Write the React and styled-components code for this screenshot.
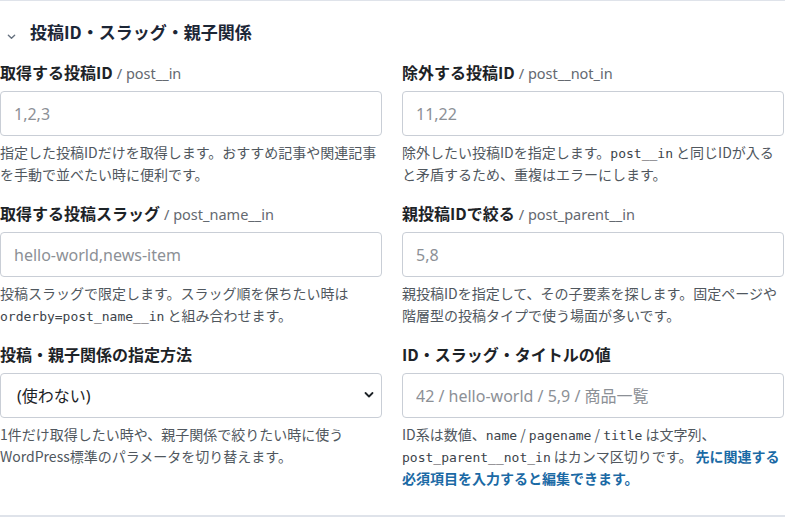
import React from "react";
import styled, { createGlobalStyle } from "styled-components";

const Global = createGlobalStyle`
  html, body { margin: 0; padding: 0; background: #ffffff; }
  body {
    font-family: "Noto Sans CJK JP", sans-serif;
    -webkit-font-smoothing: antialiased;
  }
  * { box-sizing: border-box; }
`;

const Panel = styled.section`
  width: 785px;
  border-top: 1px solid #dfe3ea;
  border-bottom: 2px solid #dfe3ea;
  padding: 19px 1px 26px 0;
`;

const Header = styled.div`
  display: flex;
  align-items: center;
  gap: 14px;
  padding-left: 7px;
  height: 24px;
  margin-bottom: 17px;
`;

const Chevron = styled.svg`
  width: 9px;
  height: 9px;
  margin-top: 9px;
  color: #66717f;
`;

const Title = styled.h2`
  margin: 0;
  font-size: 17px;
  line-height: 24px;
  font-weight: 700;
  color: #1c2636;
  font-family: "Noto Sans CJK JP", sans-serif;
`;

const Grid = styled.div`
  display: grid;
  grid-template-columns: 382px 382px;
  column-gap: 20px;
  row-gap: 17px;
  align-items: start;
`;

const Field = styled.div`
  display: flex;
  flex-direction: column;
`;

const Label = styled.label`
  display: flex;
  align-items: baseline;
  height: 22px;
  font-family: "Noto Sans CJK JP", sans-serif;
  font-size: 16px;
  line-height: 22px;
  font-weight: 700;
  color: #1d2327;
  margin-bottom: 8px;
  white-space: nowrap;
`;

const Key = styled.span`
  font-family: "Noto Sans", sans-serif;
  font-size: 14.5px;
  line-height: 1;
  font-weight: 400;
  color: #646970;
  margin-left: 4px;
`;

const Input = styled.input`
  width: 100%;
  height: 45px;
  border: 1px solid #c9ced6;
  border-radius: 4px;
  padding: 0 13px;
  font-family: "Noto Sans", "Noto Sans CJK JP", sans-serif;
  font-size: 16px;
  color: #1d2327;
  background: #fff;
  outline: none;
  &::placeholder { color: #8c9096; }
`;

const SelectWrap = styled.div`
  position: relative;
  width: 100%;
`;

const Select = styled.select`
  appearance: none;
  -webkit-appearance: none;
  width: 100%;
  height: 45px;
  border: 1px solid #c9ced6;
  border-radius: 4px;
  padding: 0 16px;
  font-family: "Noto Sans", "Noto Sans CJK JP", sans-serif;
  font-size: 16px;
  color: #1d2327;
  background: #fff;
  outline: none;
`;

const SelectArrow = styled.svg`
  position: absolute;
  right: 8px;
  top: 18px;
  width: 10px;
  height: 8px;
  pointer-events: none;
  color: #1d2327;
`;

const Help = styled.p`
  margin: 5px 0 0;
  font-family: "Noto Sans CJK JP", sans-serif;
  font-size: 14px;
  line-height: 22px;
  color: #50575e;
`;

const Code = styled.code`
  font-family: "DejaVu Sans Mono", monospace;
  font-size: 13px;
  line-height: 1;
  color: #3c434a;
`;

const Notice = styled.strong`
  font-weight: 700;
  color: #1b6aa5;
`;

export default function App() {
  return (
    <>
      <Global />
      <Panel>
        <Header>
          <Chevron viewBox="0 0 10 10" fill="none">
            <path d="M1.5 3.5 L5 7 L8.5 3.5" stroke="currentColor" strokeWidth="1.5" strokeLinecap="round" strokeLinejoin="round" />
          </Chevron>
          <Title>投稿ID・スラッグ・親子関係</Title>
        </Header>
        <Grid>
          <Field>
            <Label>取得する投稿ID<Key>/ post__in</Key></Label>
            <Input placeholder="1,2,3" />
            <Help>指定した投稿IDだけを取得します。おすすめ記事や関連記事を手動で並べたい時に便利です。</Help>
          </Field>
          <Field>
            <Label>除外する投稿ID<Key>/ post__not_in</Key></Label>
            <Input placeholder="11,22" />
            <Help>除外したい投稿IDを指定します。<Code>post__in</Code> と同じIDが入ると矛盾するため、重複はエラーにします。</Help>
          </Field>
          <Field>
            <Label>取得する投稿スラッグ<Key>/ post_name__in</Key></Label>
            <Input placeholder="hello-world,news-item" />
            <Help>投稿スラッグで限定します。スラッグ順を保ちたい時は<br /><Code>orderby=post_name__in</Code> と組み合わせます。</Help>
          </Field>
          <Field>
            <Label>親投稿IDで絞る<Key>/ post_parent__in</Key></Label>
            <Input placeholder="5,8" />
            <Help>親投稿IDを指定して、その子要素を探します。固定ページや階層型の投稿タイプで使う場面が多いです。</Help>
          </Field>
          <Field>
            <Label>投稿・親子関係の指定方法</Label>
            <SelectWrap>
              <Select defaultValue="">
                <option value="">(使わない)</option>
              </Select>
              <SelectArrow viewBox="0 0 10 8" fill="none">
                <path d="M1.5 2 L5 5.5 L8.5 2" stroke="currentColor" strokeWidth="1.8" strokeLinecap="round" strokeLinejoin="round" />
              </SelectArrow>
            </SelectWrap>
            <Help>1件だけ取得したい時や、親子関係で絞りたい時に使う<br />WordPress標準のパラメータを切り替えます。</Help>
          </Field>
          <Field>
            <Label>ID・スラッグ・タイトルの値</Label>
            <Input placeholder="42 / hello-world / 5,9 / 商品一覧" />
            <Help>ID系は数値、<Code>name</Code> / <Code>pagename</Code> / <Code>title</Code> は文字列、<br /><Code>post_parent__not_in</Code> はカンマ区切りです。 <Notice>先に関連する必須項目を入力すると編集できます。</Notice></Help>
          </Field>
        </Grid>
      </Panel>
    </>
  );
}
